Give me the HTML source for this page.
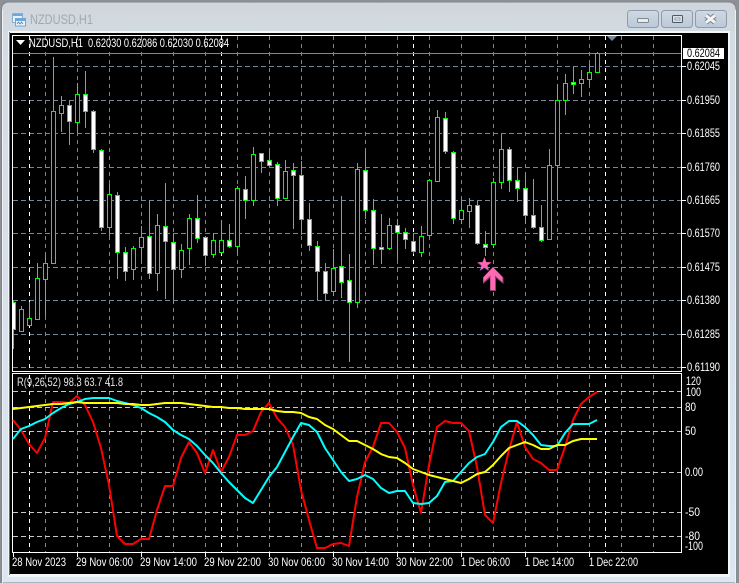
<!DOCTYPE html>
<html><head><meta charset="utf-8"><title>NZDUSD,H1</title>
<style>
html,body{margin:0;padding:0;width:739px;height:583px;overflow:hidden;background:#8d9195}
svg{display:block;position:absolute;left:0;top:0}
text{font-family:"Liberation Sans",sans-serif;font-size:11.8px;fill:#fff}
</style></head><body>
<svg width="739" height="583" viewBox="0 0 739 583" xmlns="http://www.w3.org/2000/svg">
<defs>
<linearGradient id="tb" x1="0" y1="0" x2="0" y2="1"><stop offset="0" stop-color="#d0d5da"/><stop offset="0.06" stop-color="#d3dbe3"/><stop offset="1" stop-color="#dce7f2"/></linearGradient>
<linearGradient id="btn" x1="0" y1="0" x2="0" y2="1"><stop offset="0" stop-color="#d0d9e3"/><stop offset="1" stop-color="#bac8d9"/></linearGradient>
</defs>
<!-- window -->
<path d="M1.5 583V9a7 7 0 0 1 7-7H729a7 7 0 0 1 7 7V583Z" fill="url(#tb)" stroke="#7b8690"/>
<rect x="2" y="10" width="1" height="573" fill="#eef2f6"/>
<rect x="735" y="10" width="1" height="573" fill="#eef2f6"/>
<rect x="8" y="31" width="722" height="546" fill="#f3f6f9"/>
<rect x="9" y="32" width="1" height="543" fill="#6a6a6a"/>
<rect x="10" y="33" width="718" height="541" fill="#000"/>

<!-- title icon -->
<g shape-rendering="crispEdges">
<rect x="12.5" y="13.5" width="10" height="9" fill="#e8f1fa" stroke="#7fb0da"/>
<rect x="13" y="14" width="9" height="2" fill="#6fa8d8"/>
<rect x="15.5" y="18.5" width="10" height="7.5" fill="#eef5fb" stroke="#6fa5d4"/>
<rect x="16" y="19" width="9" height="2" fill="#6fa8d8"/>
</g>
<path d="M17 24l1.5-2 1.5 2 1.5-2 1.5 2" fill="none" stroke="#5f88ad" stroke-width="0.9"/>
<text x="30" y="24" textLength="63" lengthAdjust="spacingAndGlyphs" style="font-size:13.5px;fill:#a3a9af">NZDUSD,H1</text>

<!-- window buttons -->
<rect x="627.5" y="10.5" width="31" height="17" rx="3" fill="url(#btn)" stroke="#8e9bab"/>
<rect x="661.5" y="10.5" width="31" height="17" rx="3" fill="url(#btn)" stroke="#8e9bab"/>
<rect x="695.5" y="10.5" width="31" height="17" rx="3" fill="url(#btn)" stroke="#8e9bab"/>
<rect x="637.5" y="18.5" width="11" height="4" rx="1" fill="#e8ecf0" stroke="#7e8790"/>
<rect x="672.5" y="15.5" width="10" height="7" rx="1" fill="#d8e0e8" stroke="#4f5963"/>
<rect x="675" y="18" width="5" height="2" fill="#f2f5f8" stroke="#4f5963" stroke-width="0.5"/>
<path d="M706 15.5L715 22.5M715 15.5L706 22.5" fill="none" stroke="#7e8790" stroke-width="5"/>
<path d="M706 15.5L715 22.5M715 15.5L706 22.5" fill="none" stroke="#f2f4f6" stroke-width="3"/>

<!-- grid -->
<g fill="none" shape-rendering="crispEdges">
<path stroke="#778899" stroke-dasharray="5 3" d="M13 66.5H681M13 100.5H681M13 133.5H681M13 167.5H681M13 200.5H681M13 233.5H681M13 267.5H681M13 300.5H681M13 334.5H681M13 367.5H681"/>
<path stroke="#778899" stroke-dasharray="4 4" d="M45.5 36V371M77.5 36V371M109.5 36V371M141.5 36V371M173.5 36V371M205.5 36V371M237.5 36V371M269.5 36V371M301.5 36V371M333.5 36V371M365.5 36V371M397.5 36V371M429.5 36V371M461.5 36V371M493.5 36V371M525.5 36V371M557.5 36V371M589.5 36V371M621.5 36V371M653.5 36V371"/>
<path stroke="#fff" stroke-dasharray="4 4" d="M29.5 36V371M221.5 36V371M413.5 36V371M605.5 36V371"/>
<path stroke="#778899" stroke-dasharray="4 4" d="M45.5 375V553M77.5 375V553M109.5 375V553M141.5 375V553M173.5 375V553M205.5 375V553M237.5 375V553M269.5 375V553M301.5 375V553M333.5 375V553M365.5 375V553M397.5 375V553M429.5 375V553M461.5 375V553M493.5 375V553M525.5 375V553M557.5 375V553M589.5 375V553M621.5 375V553M653.5 375V553"/>
<path stroke="#fff" stroke-dasharray="4 4" d="M29.5 375V553M221.5 375V553M413.5 375V553M605.5 375V553"/>
<path stroke="#c4c9cf" stroke-dasharray="5 3" d="M13 391.5H681M13 407.5H681M13 431.5H681M13 472.5H681M13 512.5H681M13 536.5H681"/>
</g>

<!-- current price line -->
<rect x="13" y="53" width="669" height="1" fill="#778899" shape-rendering="crispEdges"/>

<!-- candles -->
<g shape-rendering="crispEdges" stroke="#00ff00" stroke-width="1">
<path fill="none" d="M13.5 301V349M21.5 306V332M29.5 302V326M37.5 263V319M45.5 255V316M53.5 57V264M61.5 96V132M69.5 100V145M77.5 83V133M85.5 71V128M93.5 110V153M101.5 149V231M109.5 184V236M117.5 192V279M125.5 247V281M133.5 246V280M141.5 226V261M149.5 200V279M157.5 214V291M165.5 183V299M173.5 234V303M181.5 244V278M189.5 214V265M197.5 195V243M205.5 237V266M213.5 233V258M221.5 220V252M229.5 224V248M237.5 186V254M245.5 176V219M253.5 147V206M261.5 153V173M269.5 149V165M277.5 162V206M285.5 160V199M293.5 163V229M301.5 161V235M309.5 203V251M317.5 241V300M325.5 263V301M333.5 249V296M341.5 196V298M349.5 254V362M357.5 163V308M365.5 149V219M373.5 199V265M381.5 214V264M389.5 218V250M397.5 219V260M405.5 228V249M413.5 234V254M421.5 226V257M429.5 179V237M437.5 110V181M445.5 112V154M453.5 151V224M461.5 198V224M469.5 198V228M477.5 201V245M485.5 231V256M493.5 178V248M501.5 134V189M509.5 147V192M517.5 168V202M525.5 173V224M533.5 179V229M541.5 205V242M549.5 149V239M557.5 84V200M565.5 74V115M573.5 67V94M581.5 70V97M589.5 64V86M597.5 52V72"/>
<path fill="#000" d="M19.5 309.5h4V331.5h-4zM27.5 318.5h4V325.5h-4zM35.5 278.5h4V319.5h-4zM43.5 263.5h4V279.5h-4zM51.5 111.5h4V263.5h-4zM59.5 105.5h4V113.5h-4zM75.5 94.5h4V122.5h-4zM107.5 194.5h4V227.5h-4zM131.5 248.5h4V269.5h-4zM139.5 237.5h4V247.5h-4zM155.5 225.5h4V273.5h-4zM179.5 250.5h4V269.5h-4zM187.5 218.5h4V248.5h-4zM211.5 240.5h4V254.5h-4zM219.5 240.5h4V252.5h-4zM235.5 188.5h4V246.5h-4zM251.5 154.5h4V200.5h-4zM283.5 171.5h4V198.5h-4zM331.5 268.5h4V291.5h-4zM355.5 169.5h4V302.5h-4zM387.5 225.5h4V248.5h-4zM419.5 236.5h4V252.5h-4zM427.5 180.5h4V235.5h-4zM435.5 117.5h4V181.5h-4zM459.5 210.5h4V219.5h-4zM467.5 205.5h4V211.5h-4zM491.5 182.5h4V244.5h-4zM499.5 149.5h4V182.5h-4zM547.5 165.5h4V239.5h-4zM555.5 100.5h4V165.5h-4zM563.5 83.5h4V100.5h-4zM579.5 79.5h4V83.5h-4zM587.5 72.5h4V79.5h-4zM595.5 53.5h4V72.5h-4z"/>
<path fill="#fff" d="M12.5 302.5H15.5V329.5H12.5ZM67.5 105.5h4V121.5h-4zM83.5 94.5h4V111.5h-4zM91.5 111.5h4V149.5h-4zM99.5 150.5h4V227.5h-4zM115.5 195.5h4V252.5h-4zM123.5 252.5h4V271.5h-4zM147.5 236.5h4V273.5h-4zM163.5 226.5h4V241.5h-4zM171.5 242.5h4V269.5h-4zM195.5 218.5h4V238.5h-4zM203.5 237.5h4V255.5h-4zM227.5 240.5h4V246.5h-4zM243.5 189.5h4V200.5h-4zM259.5 153.5h4V161.5h-4zM267.5 160.5h4V165.5h-4zM275.5 164.5h4V198.5h-4zM291.5 170.5h4V175.5h-4zM299.5 175.5h4V219.5h-4zM307.5 219.5h4V245.5h-4zM315.5 246.5h4V271.5h-4zM323.5 271.5h4V293.5h-4zM339.5 266.5h4V282.5h-4zM347.5 280.5h4V302.5h-4zM363.5 170.5h4V210.5h-4zM371.5 210.5h4V248.5h-4zM379.5 247.5h4V249.5h-4zM395.5 225.5h4V232.5h-4zM403.5 232.5h4V239.5h-4zM411.5 241.5h4V251.5h-4zM443.5 118.5h4V151.5h-4zM451.5 152.5h4V218.5h-4zM475.5 205.5h4V243.5h-4zM483.5 244.5h4V247.5h-4zM507.5 149.5h4V180.5h-4zM515.5 180.5h4V188.5h-4zM523.5 188.5h4V215.5h-4zM531.5 215.5h4V227.5h-4zM539.5 227.5h4V240.5h-4zM571.5 82.5h4V84.5h-4z"/>
</g>

<!-- star & arrow -->
<path d="M484.5 257L486.3 262.1L491.6 262.2L487.4 265.4L488.9 270.6L484.5 267.5L480.1 270.6L481.6 265.4L477.4 262.2L482.7 262.1Z" fill="#2b2f9a" transform="translate(-.6 .7)"/>
<path d="M484.5 257L486.3 262.1L491.6 262.2L487.4 265.4L488.9 270.6L484.5 267.5L480.1 270.6L481.6 265.4L477.4 262.2L482.7 262.1Z" fill="#ff69b4"/>
<path d="M493 267L503.5 277.5V284L496 278V291H490V278L483 284V277.5Z" fill="#8e3f70"/>
<path d="M492.8 267.2L502.4 277V282L495 275.5V290H490.5V275.5L483.5 282V277Z" fill="#ff69b4"/>

<!-- marker triangle -->
<path d="M607 36H617L612 41Z" fill="#778899"/>

<!-- panel borders -->
<g fill="none" stroke="#fff" shape-rendering="crispEdges">
<rect x="12.5" y="35.5" width="669" height="336"/>
<rect x="12.5" y="373.5" width="669" height="179"/>
</g>

<!-- indicator lines -->
<g fill="none" stroke-width="2" stroke-linejoin="round">
<polyline stroke="#ff0000" points="13,420 21,430 29,444 37,453 45,438 53,402 61,402 69,403 77,396 85,405 93,422 101,448 109,485 117,536 125,544 133,544 141,539 149,539 157,510 165,486 173,486 181,458 189,442 197,453 205,473 213,450 221,472 229,457 237,435 245,435 253,431 261,412 269,403 277,418 285,427 293,445 301,490 309,520 317,548 325,548 333,544 341,543 349,546 357,497 365,462 373,447 381,423 389,423 397,432 405,448 413,485 421,513 429,465 437,427 445,421 453,423 461,423 469,431 477,467 485,515 493,523 501,483 509,450 517,422 525,447 533,459 541,463 549,470 557,470 565,447 573,420 581,404 589,397 597,392"/>
<polyline stroke="#00ffff" points="13,439 21,429 29,426 37,422 45,419 53,413 61,408 69,404 77,402 85,399 93,398 101,398 109,398 117,401 125,403 133,405 141,408 149,413 157,417 165,422 173,430 181,435 189,439 197,446 205,455 213,463 221,473 229,482 237,490 245,498 253,503 261,490 269,477 277,467 285,452 293,437 301,423 309,425 317,432 325,448 333,460 341,472 349,481 357,479 365,475 373,479 381,488 389,493 397,491 405,491 413,503 421,504 429,503 437,496 445,482 453,481 461,472 469,463 477,457 485,454 493,442 501,427 509,421 517,421 525,427 533,435 541,445 549,446 557,446 565,433 573,424 581,424 589,424 597,420"/>
<polyline stroke="#ffff00" points="13,409 21,408 29,407 37,406 45,405 53,404 61,404 69,403 77,402 85,403 93,403 101,403 109,403 117,403 125,404 133,404 141,405 149,405 157,404 165,403 173,403 181,403 189,404 197,405 205,406 213,407 221,407 229,408 237,408 245,409 253,409 261,409 269,409 277,411 285,412 293,412 301,413 309,417 317,419 325,425 333,429 341,435 349,441 357,441 365,445 373,449 381,454 389,457 397,458 405,463 413,469 421,472 429,475 437,477 445,479 453,481 461,483 469,479 477,474 485,472 493,465 501,456 509,448 517,445 525,442 533,445 541,449 549,449 557,445 565,445 573,441 581,439 589,439 597,439"/>
</g>

<!-- legend -->
<path d="M16 41H25L20.5 46Z" fill="#fff" transform="translate(0 -1)"/>
<text x="29" y="47" textLength="54" lengthAdjust="spacingAndGlyphs">NZDUSD,H1</text>
<text x="88" y="47" textLength="141" lengthAdjust="spacingAndGlyphs">0.62030 0.62086 0.62030 0.62084</text>
<text x="17" y="386" textLength="106" lengthAdjust="spacingAndGlyphs" style="fill:#e6e6e6">R(9,26,52) 98.3 63.7 41.8</text>

<!-- price ticks -->
<path stroke="#fff" shape-rendering="crispEdges" d="M682 66.5h4M682 100.5h4M682 133.5h4M682 167.5h4M682 200.5h4M682 233.5h4M682 267.5h4M682 300.5h4M682 334.5h4M682 367.5h4M13.5 553v4M77.5 553v4M141.5 553v4M205.5 553v4M269.5 553v4M333.5 553v4M397.5 553v4M461.5 553v4M525.5 553v4M589.5 553v4"/>
<rect x="683" y="48" width="41" height="11" fill="#fff"/>
<text x="687" y="57" textLength="33" lengthAdjust="spacingAndGlyphs" style="fill:#000">0.62084</text>
<g>
<text x="687" y="70" textLength="33" lengthAdjust="spacingAndGlyphs">0.62045</text>
<text x="687" y="104" textLength="33" lengthAdjust="spacingAndGlyphs">0.61950</text>
<text x="687" y="137" textLength="33" lengthAdjust="spacingAndGlyphs">0.61855</text>
<text x="687" y="171" textLength="33" lengthAdjust="spacingAndGlyphs">0.61760</text>
<text x="687" y="204" textLength="33" lengthAdjust="spacingAndGlyphs">0.61665</text>
<text x="687" y="237" textLength="33" lengthAdjust="spacingAndGlyphs">0.61570</text>
<text x="687" y="271" textLength="33" lengthAdjust="spacingAndGlyphs">0.61475</text>
<text x="687" y="304" textLength="33" lengthAdjust="spacingAndGlyphs">0.61380</text>
<text x="687" y="338" textLength="33" lengthAdjust="spacingAndGlyphs">0.61285</text>
<text x="687" y="371" textLength="33" lengthAdjust="spacingAndGlyphs">0.61190</text>
<text x="686" y="385" textLength="15" lengthAdjust="spacingAndGlyphs">120</text>
<text x="686" y="396" textLength="15" lengthAdjust="spacingAndGlyphs">100</text>
<text x="685" y="411" textLength="11" lengthAdjust="spacingAndGlyphs">80</text>
<text x="685" y="435" textLength="11" lengthAdjust="spacingAndGlyphs">50</text>
<text x="685" y="476" textLength="18" lengthAdjust="spacingAndGlyphs">0.00</text>
<text x="685" y="516" textLength="15" lengthAdjust="spacingAndGlyphs">-50</text>
<text x="685" y="540" textLength="15" lengthAdjust="spacingAndGlyphs">-80</text>
<text x="685" y="550" textLength="18" lengthAdjust="spacingAndGlyphs">-100</text>
</g>

<!-- time axis -->
<text x="12" y="566" textLength="54" lengthAdjust="spacingAndGlyphs">28 Nov 2023</text>
<text x="76" y="566" textLength="57" lengthAdjust="spacingAndGlyphs">29 Nov 06:00</text>
<text x="140" y="566" textLength="57" lengthAdjust="spacingAndGlyphs">29 Nov 14:00</text>
<text x="204" y="566" textLength="57" lengthAdjust="spacingAndGlyphs">29 Nov 22:00</text>
<text x="268" y="566" textLength="57" lengthAdjust="spacingAndGlyphs">30 Nov 06:00</text>
<text x="332" y="566" textLength="57" lengthAdjust="spacingAndGlyphs">30 Nov 14:00</text>
<text x="396" y="566" textLength="57" lengthAdjust="spacingAndGlyphs">30 Nov 22:00</text>
<text x="461" y="566" textLength="49" lengthAdjust="spacingAndGlyphs">1 Dec 06:00</text>
<text x="525" y="566" textLength="49" lengthAdjust="spacingAndGlyphs">1 Dec 14:00</text>
<text x="589" y="566" textLength="49" lengthAdjust="spacingAndGlyphs">1 Dec 22:00</text>
</svg>
</body></html>
